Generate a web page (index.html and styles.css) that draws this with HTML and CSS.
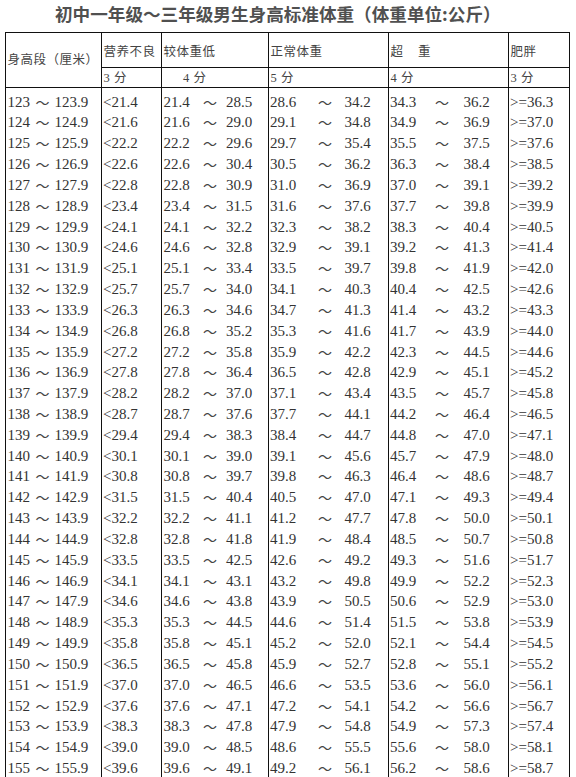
FILE: index.html
```html
<!DOCTYPE html>
<html lang="zh-CN">
<head>
<meta charset="utf-8">
<title>初中一年级～三年级男生身高标准体重</title>
<link rel="stylesheet" href="styles.css">
</head>
<body>
<h1 class="title">初中一年级～三年级男生身高标准体重（体重单位:公斤）</h1>
<table class="wt">
<colgroup>
<col class="c1"><col class="c2"><col class="c3"><col class="c4"><col class="c5"><col class="c6">
</colgroup>
<thead>
<tr class="h1">
<th rowspan="2" class="hs">身高段（厘米）</th>
<th>营养不良</th>
<th>较体重低</th>
<th>正常体重</th>
<th>超<span class="gap"></span>重</th>
<th>肥胖</th>
</tr>
<tr class="h2">
<th>3 分</th>
<th class="pad4">4 分</th>
<th>5 分</th>
<th>4 分</th>
<th>3 分</th>
</tr>
</thead>
<tbody>
<tr><td><div class="r r1"><span>123</span><span class="tl">～</span><span>123.9</span></div></td><td>&lt;21.4</td><td><div class="r r3"><span>21.4</span><span class="tl">～</span><span>28.5</span></div></td><td><div class="r r4"><span>28.6</span><span class="tl">～</span><span>34.2</span></div></td><td><div class="r r5"><span>34.3</span><span class="tl">～</span><span>36.2</span></div></td><td>&gt;=36.3</td></tr>
<tr><td><div class="r r1"><span>124</span><span class="tl">～</span><span>124.9</span></div></td><td>&lt;21.6</td><td><div class="r r3"><span>21.6</span><span class="tl">～</span><span>29.0</span></div></td><td><div class="r r4"><span>29.1</span><span class="tl">～</span><span>34.8</span></div></td><td><div class="r r5"><span>34.9</span><span class="tl">～</span><span>36.9</span></div></td><td>&gt;=37.0</td></tr>
<tr><td><div class="r r1"><span>125</span><span class="tl">～</span><span>125.9</span></div></td><td>&lt;22.2</td><td><div class="r r3"><span>22.2</span><span class="tl">～</span><span>29.6</span></div></td><td><div class="r r4"><span>29.7</span><span class="tl">～</span><span>35.4</span></div></td><td><div class="r r5"><span>35.5</span><span class="tl">～</span><span>37.5</span></div></td><td>&gt;=37.6</td></tr>
<tr><td><div class="r r1"><span>126</span><span class="tl">～</span><span>126.9</span></div></td><td>&lt;22.6</td><td><div class="r r3"><span>22.6</span><span class="tl">～</span><span>30.4</span></div></td><td><div class="r r4"><span>30.5</span><span class="tl">～</span><span>36.2</span></div></td><td><div class="r r5"><span>36.3</span><span class="tl">～</span><span>38.4</span></div></td><td>&gt;=38.5</td></tr>
<tr><td><div class="r r1"><span>127</span><span class="tl">～</span><span>127.9</span></div></td><td>&lt;22.8</td><td><div class="r r3"><span>22.8</span><span class="tl">～</span><span>30.9</span></div></td><td><div class="r r4"><span>31.0</span><span class="tl">～</span><span>36.9</span></div></td><td><div class="r r5"><span>37.0</span><span class="tl">～</span><span>39.1</span></div></td><td>&gt;=39.2</td></tr>
<tr><td><div class="r r1"><span>128</span><span class="tl">～</span><span>128.9</span></div></td><td>&lt;23.4</td><td><div class="r r3"><span>23.4</span><span class="tl">～</span><span>31.5</span></div></td><td><div class="r r4"><span>31.6</span><span class="tl">～</span><span>37.6</span></div></td><td><div class="r r5"><span>37.7</span><span class="tl">～</span><span>39.8</span></div></td><td>&gt;=39.9</td></tr>
<tr><td><div class="r r1"><span>129</span><span class="tl">～</span><span>129.9</span></div></td><td>&lt;24.1</td><td><div class="r r3"><span>24.1</span><span class="tl">～</span><span>32.2</span></div></td><td><div class="r r4"><span>32.3</span><span class="tl">～</span><span>38.2</span></div></td><td><div class="r r5"><span>38.3</span><span class="tl">～</span><span>40.4</span></div></td><td>&gt;=40.5</td></tr>
<tr><td><div class="r r1"><span>130</span><span class="tl">～</span><span>130.9</span></div></td><td>&lt;24.6</td><td><div class="r r3"><span>24.6</span><span class="tl">～</span><span>32.8</span></div></td><td><div class="r r4"><span>32.9</span><span class="tl">～</span><span>39.1</span></div></td><td><div class="r r5"><span>39.2</span><span class="tl">～</span><span>41.3</span></div></td><td>&gt;=41.4</td></tr>
<tr><td><div class="r r1"><span>131</span><span class="tl">～</span><span>131.9</span></div></td><td>&lt;25.1</td><td><div class="r r3"><span>25.1</span><span class="tl">～</span><span>33.4</span></div></td><td><div class="r r4"><span>33.5</span><span class="tl">～</span><span>39.7</span></div></td><td><div class="r r5"><span>39.8</span><span class="tl">～</span><span>41.9</span></div></td><td>&gt;=42.0</td></tr>
<tr><td><div class="r r1"><span>132</span><span class="tl">～</span><span>132.9</span></div></td><td>&lt;25.7</td><td><div class="r r3"><span>25.7</span><span class="tl">～</span><span>34.0</span></div></td><td><div class="r r4"><span>34.1</span><span class="tl">～</span><span>40.3</span></div></td><td><div class="r r5"><span>40.4</span><span class="tl">～</span><span>42.5</span></div></td><td>&gt;=42.6</td></tr>
<tr><td><div class="r r1"><span>133</span><span class="tl">～</span><span>133.9</span></div></td><td>&lt;26.3</td><td><div class="r r3"><span>26.3</span><span class="tl">～</span><span>34.6</span></div></td><td><div class="r r4"><span>34.7</span><span class="tl">～</span><span>41.3</span></div></td><td><div class="r r5"><span>41.4</span><span class="tl">～</span><span>43.2</span></div></td><td>&gt;=43.3</td></tr>
<tr><td><div class="r r1"><span>134</span><span class="tl">～</span><span>134.9</span></div></td><td>&lt;26.8</td><td><div class="r r3"><span>26.8</span><span class="tl">～</span><span>35.2</span></div></td><td><div class="r r4"><span>35.3</span><span class="tl">～</span><span>41.6</span></div></td><td><div class="r r5"><span>41.7</span><span class="tl">～</span><span>43.9</span></div></td><td>&gt;=44.0</td></tr>
<tr><td><div class="r r1"><span>135</span><span class="tl">～</span><span>135.9</span></div></td><td>&lt;27.2</td><td><div class="r r3"><span>27.2</span><span class="tl">～</span><span>35.8</span></div></td><td><div class="r r4"><span>35.9</span><span class="tl">～</span><span>42.2</span></div></td><td><div class="r r5"><span>42.3</span><span class="tl">～</span><span>44.5</span></div></td><td>&gt;=44.6</td></tr>
<tr><td><div class="r r1"><span>136</span><span class="tl">～</span><span>136.9</span></div></td><td>&lt;27.8</td><td><div class="r r3"><span>27.8</span><span class="tl">～</span><span>36.4</span></div></td><td><div class="r r4"><span>36.5</span><span class="tl">～</span><span>42.8</span></div></td><td><div class="r r5"><span>42.9</span><span class="tl">～</span><span>45.1</span></div></td><td>&gt;=45.2</td></tr>
<tr><td><div class="r r1"><span>137</span><span class="tl">～</span><span>137.9</span></div></td><td>&lt;28.2</td><td><div class="r r3"><span>28.2</span><span class="tl">～</span><span>37.0</span></div></td><td><div class="r r4"><span>37.1</span><span class="tl">～</span><span>43.4</span></div></td><td><div class="r r5"><span>43.5</span><span class="tl">～</span><span>45.7</span></div></td><td>&gt;=45.8</td></tr>
<tr><td><div class="r r1"><span>138</span><span class="tl">～</span><span>138.9</span></div></td><td>&lt;28.7</td><td><div class="r r3"><span>28.7</span><span class="tl">～</span><span>37.6</span></div></td><td><div class="r r4"><span>37.7</span><span class="tl">～</span><span>44.1</span></div></td><td><div class="r r5"><span>44.2</span><span class="tl">～</span><span>46.4</span></div></td><td>&gt;=46.5</td></tr>
<tr><td><div class="r r1"><span>139</span><span class="tl">～</span><span>139.9</span></div></td><td>&lt;29.4</td><td><div class="r r3"><span>29.4</span><span class="tl">～</span><span>38.3</span></div></td><td><div class="r r4"><span>38.4</span><span class="tl">～</span><span>44.7</span></div></td><td><div class="r r5"><span>44.8</span><span class="tl">～</span><span>47.0</span></div></td><td>&gt;=47.1</td></tr>
<tr><td><div class="r r1"><span>140</span><span class="tl">～</span><span>140.9</span></div></td><td>&lt;30.1</td><td><div class="r r3"><span>30.1</span><span class="tl">～</span><span>39.0</span></div></td><td><div class="r r4"><span>39.1</span><span class="tl">～</span><span>45.6</span></div></td><td><div class="r r5"><span>45.7</span><span class="tl">～</span><span>47.9</span></div></td><td>&gt;=48.0</td></tr>
<tr><td><div class="r r1"><span>141</span><span class="tl">～</span><span>141.9</span></div></td><td>&lt;30.8</td><td><div class="r r3"><span>30.8</span><span class="tl">～</span><span>39.7</span></div></td><td><div class="r r4"><span>39.8</span><span class="tl">～</span><span>46.3</span></div></td><td><div class="r r5"><span>46.4</span><span class="tl">～</span><span>48.6</span></div></td><td>&gt;=48.7</td></tr>
<tr><td><div class="r r1"><span>142</span><span class="tl">～</span><span>142.9</span></div></td><td>&lt;31.5</td><td><div class="r r3"><span>31.5</span><span class="tl">～</span><span>40.4</span></div></td><td><div class="r r4"><span>40.5</span><span class="tl">～</span><span>47.0</span></div></td><td><div class="r r5"><span>47.1</span><span class="tl">～</span><span>49.3</span></div></td><td>&gt;=49.4</td></tr>
<tr><td><div class="r r1"><span>143</span><span class="tl">～</span><span>143.9</span></div></td><td>&lt;32.2</td><td><div class="r r3"><span>32.2</span><span class="tl">～</span><span>41.1</span></div></td><td><div class="r r4"><span>41.2</span><span class="tl">～</span><span>47.7</span></div></td><td><div class="r r5"><span>47.8</span><span class="tl">～</span><span>50.0</span></div></td><td>&gt;=50.1</td></tr>
<tr><td><div class="r r1"><span>144</span><span class="tl">～</span><span>144.9</span></div></td><td>&lt;32.8</td><td><div class="r r3"><span>32.8</span><span class="tl">～</span><span>41.8</span></div></td><td><div class="r r4"><span>41.9</span><span class="tl">～</span><span>48.4</span></div></td><td><div class="r r5"><span>48.5</span><span class="tl">～</span><span>50.7</span></div></td><td>&gt;=50.8</td></tr>
<tr><td><div class="r r1"><span>145</span><span class="tl">～</span><span>145.9</span></div></td><td>&lt;33.5</td><td><div class="r r3"><span>33.5</span><span class="tl">～</span><span>42.5</span></div></td><td><div class="r r4"><span>42.6</span><span class="tl">～</span><span>49.2</span></div></td><td><div class="r r5"><span>49.3</span><span class="tl">～</span><span>51.6</span></div></td><td>&gt;=51.7</td></tr>
<tr><td><div class="r r1"><span>146</span><span class="tl">～</span><span>146.9</span></div></td><td>&lt;34.1</td><td><div class="r r3"><span>34.1</span><span class="tl">～</span><span>43.1</span></div></td><td><div class="r r4"><span>43.2</span><span class="tl">～</span><span>49.8</span></div></td><td><div class="r r5"><span>49.9</span><span class="tl">～</span><span>52.2</span></div></td><td>&gt;=52.3</td></tr>
<tr><td><div class="r r1"><span>147</span><span class="tl">～</span><span>147.9</span></div></td><td>&lt;34.6</td><td><div class="r r3"><span>34.6</span><span class="tl">～</span><span>43.8</span></div></td><td><div class="r r4"><span>43.9</span><span class="tl">～</span><span>50.5</span></div></td><td><div class="r r5"><span>50.6</span><span class="tl">～</span><span>52.9</span></div></td><td>&gt;=53.0</td></tr>
<tr><td><div class="r r1"><span>148</span><span class="tl">～</span><span>148.9</span></div></td><td>&lt;35.3</td><td><div class="r r3"><span>35.3</span><span class="tl">～</span><span>44.5</span></div></td><td><div class="r r4"><span>44.6</span><span class="tl">～</span><span>51.4</span></div></td><td><div class="r r5"><span>51.5</span><span class="tl">～</span><span>53.8</span></div></td><td>&gt;=53.9</td></tr>
<tr><td><div class="r r1"><span>149</span><span class="tl">～</span><span>149.9</span></div></td><td>&lt;35.8</td><td><div class="r r3"><span>35.8</span><span class="tl">～</span><span>45.1</span></div></td><td><div class="r r4"><span>45.2</span><span class="tl">～</span><span>52.0</span></div></td><td><div class="r r5"><span>52.1</span><span class="tl">～</span><span>54.4</span></div></td><td>&gt;=54.5</td></tr>
<tr><td><div class="r r1"><span>150</span><span class="tl">～</span><span>150.9</span></div></td><td>&lt;36.5</td><td><div class="r r3"><span>36.5</span><span class="tl">～</span><span>45.8</span></div></td><td><div class="r r4"><span>45.9</span><span class="tl">～</span><span>52.7</span></div></td><td><div class="r r5"><span>52.8</span><span class="tl">～</span><span>55.1</span></div></td><td>&gt;=55.2</td></tr>
<tr><td><div class="r r1"><span>151</span><span class="tl">～</span><span>151.9</span></div></td><td>&lt;37.0</td><td><div class="r r3"><span>37.0</span><span class="tl">～</span><span>46.5</span></div></td><td><div class="r r4"><span>46.6</span><span class="tl">～</span><span>53.5</span></div></td><td><div class="r r5"><span>53.6</span><span class="tl">～</span><span>56.0</span></div></td><td>&gt;=56.1</td></tr>
<tr><td><div class="r r1"><span>152</span><span class="tl">～</span><span>152.9</span></div></td><td>&lt;37.6</td><td><div class="r r3"><span>37.6</span><span class="tl">～</span><span>47.1</span></div></td><td><div class="r r4"><span>47.2</span><span class="tl">～</span><span>54.1</span></div></td><td><div class="r r5"><span>54.2</span><span class="tl">～</span><span>56.6</span></div></td><td>&gt;=56.7</td></tr>
<tr><td><div class="r r1"><span>153</span><span class="tl">～</span><span>153.9</span></div></td><td>&lt;38.3</td><td><div class="r r3"><span>38.3</span><span class="tl">～</span><span>47.8</span></div></td><td><div class="r r4"><span>47.9</span><span class="tl">～</span><span>54.8</span></div></td><td><div class="r r5"><span>54.9</span><span class="tl">～</span><span>57.3</span></div></td><td>&gt;=57.4</td></tr>
<tr><td><div class="r r1"><span>154</span><span class="tl">～</span><span>154.9</span></div></td><td>&lt;39.0</td><td><div class="r r3"><span>39.0</span><span class="tl">～</span><span>48.5</span></div></td><td><div class="r r4"><span>48.6</span><span class="tl">～</span><span>55.5</span></div></td><td><div class="r r5"><span>55.6</span><span class="tl">～</span><span>58.0</span></div></td><td>&gt;=58.1</td></tr>
<tr class="last"><td><div class="r r1"><span>155</span><span class="tl">～</span><span>155.9</span></div></td><td>&lt;39.6</td><td><div class="r r3"><span>39.6</span><span class="tl">～</span><span>49.1</span></div></td><td><div class="r r4"><span>49.2</span><span class="tl">～</span><span>56.1</span></div></td><td><div class="r r5"><span>56.2</span><span class="tl">～</span><span>58.6</span></div></td><td>&gt;=58.7</td></tr>
</tbody>
</table>
</body>
</html>
```
FILE: styles.css
```css
* { box-sizing: border-box; }
html, body { margin: 0; padding: 0; background: #fff; }
body {
  font-family: "Liberation Serif", "Noto Sans CJK SC", serif;
  color: #333;
  overflow: hidden;
}
.title {
  margin: 0;
  height: 32px;
  padding: 0 0 4px 55px;
  line-height: 28px;
  font-family: "Noto Sans CJK SC", sans-serif;
  font-size: 17.6px;
  letter-spacing: 0;
  font-weight: 700;
  color: #505050;
  white-space: nowrap;
}
.wt {
  margin-left: 5px;
  border-collapse: collapse;
  table-layout: fixed;
  width: 565px;
}
.c1 { width: 96px; }
.c2 { width: 60px; }
.c3 { width: 107px; }
.c4 { width: 120px; }
.c5 { width: 120px; }
.c6 { width: 61px; }

th {
  border: 1px solid #111;
  font-weight: normal;
  text-align: left;
  vertical-align: top;
  font-family: "Liberation Serif", "Noto Sans CJK SC", serif;
  font-size: 12.5px;
  letter-spacing: 0.5px;
  color: #444;
  padding: 0 0 0 1.5px;
  white-space: nowrap;
}
.h1 { height: 35px; }
.h1 th { padding-top: 8.5px; line-height: 20px; }
.h1 th.hs { padding-top: 16.8px; }
.h2 { height: 20px; }
.h2 th { padding-top: 1.2px; line-height: 18px; }
.h2 th.pad4 { padding-left: 21px; }
.gap { display: inline-block; width: 14.5px; }

td {
  border-left: 1px solid #111;
  border-right: 1px solid #111;
  padding: 6.4px 0 0 1px;
  line-height: 14.43px;
  height: 20.83px;
  vertical-align: top;
  font-size: 15px;
  white-space: nowrap;
}
tbody tr { height: 20.83px; }
tbody tr.last td { height: 23.6px; }

.r { display: grid; align-items: start; }
.r1 { grid-template-columns: 28px 19px auto; padding-left: 0.5px; }
.r3 { grid-template-columns: 39.5px 23px auto; padding-left: 0.5px; }
.r4 { grid-template-columns: 48px 26.5px auto; }
.r5 { grid-template-columns: 45px 28.5px auto; }
.tl {
  font-family: "Noto Sans CJK SC", sans-serif;
  font-size: 14px;
  color: #444;
}
```
